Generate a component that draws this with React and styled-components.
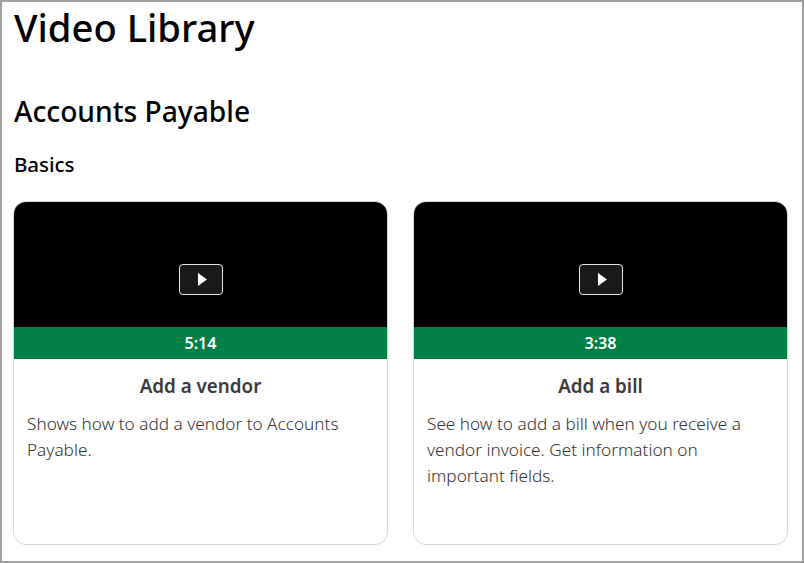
import React from "react";
import styled, { createGlobalStyle } from "styled-components";

const GlobalStyle = createGlobalStyle`
	html, body {
		margin: 0;
		padding: 0;
		background: #fff;
	}
	body {
		font-family: "Noto Sans", "Open Sans", sans-serif;
		color: #000;
	}
`;

const Page = styled.div`
	box-sizing: border-box;
	width: 804px;
	height: 563px;
	overflow: hidden;
	border: 2px solid #a0a0a0;
	padding: 0 14px 0 11px;
`;
const Title = styled.h1`
	margin: 0 0 0 1px;
	font-size: 38.2px;
	line-height: 50px;
	font-weight: 550;
`;
const Section = styled.h2`
	margin: 40px 0 0 1px;
	font-size: 28.2px;
	line-height: 38px;
	font-weight: 550;
`;
const SubSection = styled.h3`
	margin: 20px 0 0;
	padding-left: 1px;
	font-size: 20.6px;
	line-height: 28px;
	font-weight: 550;
	letter-spacing: -0.1px;
`;
const Grid = styled.div`
	display: grid;
	grid-template-columns: 375px 375px;
	gap: 25px;
	margin-top: 23px;
`;
const Card = styled.div`
	box-sizing: border-box;
	height: 344px;
	border: 1px solid #d6d6d6;
	border-radius: 13px;
	overflow: hidden;
`;
const Video = styled.div`
	display: flex;
	align-items: center;
	justify-content: center;
	height: 125px;
	background: #000;
`;
const PlayButton = styled.div`
	box-sizing: border-box;
	display: flex;
	align-items: center;
	justify-content: center;
	width: 44px;
	height: 31px;
	margin-top: 29px;
	padding-left: 3px;
	border: 1px solid #e8e8e8;
	border-radius: 4px;
	background: #1a1a1a;
`;
const Duration = styled.div`
	height: 32px;
	background: #008046;
	color: #fff;
	font-size: 16.2px;
	line-height: 32px;
	font-weight: 600;
	text-align: center;
`;
const CardTitle = styled.div`
	margin-top: 14px;
	color: #3a3a3a;
	font-size: 18.8px;
	line-height: 26px;
	font-weight: 600;
	text-align: center;
`;
const CardText = styled.p`
	margin: 12px 0 0;
	padding: 0 22px 0 13px;
	color: #333;
	font-size: 17.2px;
	line-height: 26px;
	font-weight: 350;
`;

const videos = [
	{ time: "5:14", title: "Add a vendor", text: "Shows how to add a vendor to Accounts Payable." },
	{
		time: "3:38",
		title: "Add a bill",
		text: "See how to add a bill when you receive a vendor invoice. Get information on important fields."
	}
];

export default function App() {
	return (
		<Page>
			<GlobalStyle />
			<Title>Video Library</Title>
			<Section>Accounts Payable</Section>
			<SubSection>Basics</SubSection>
			<Grid>
				{videos.map(video => (
					<Card key={video.title}>
						<Video>
							<PlayButton>
								<svg width="9" height="13" viewBox="0 0 9 13">
									<path d="M0 0 L9 6.5 L0 13 Z" fill="#fff" />
								</svg>
							</PlayButton>
						</Video>
						<Duration>{video.time}</Duration>
						<CardTitle>{video.title}</CardTitle>
						<CardText>{video.text}</CardText>
					</Card>
				))}
			</Grid>
		</Page>
	);
}
